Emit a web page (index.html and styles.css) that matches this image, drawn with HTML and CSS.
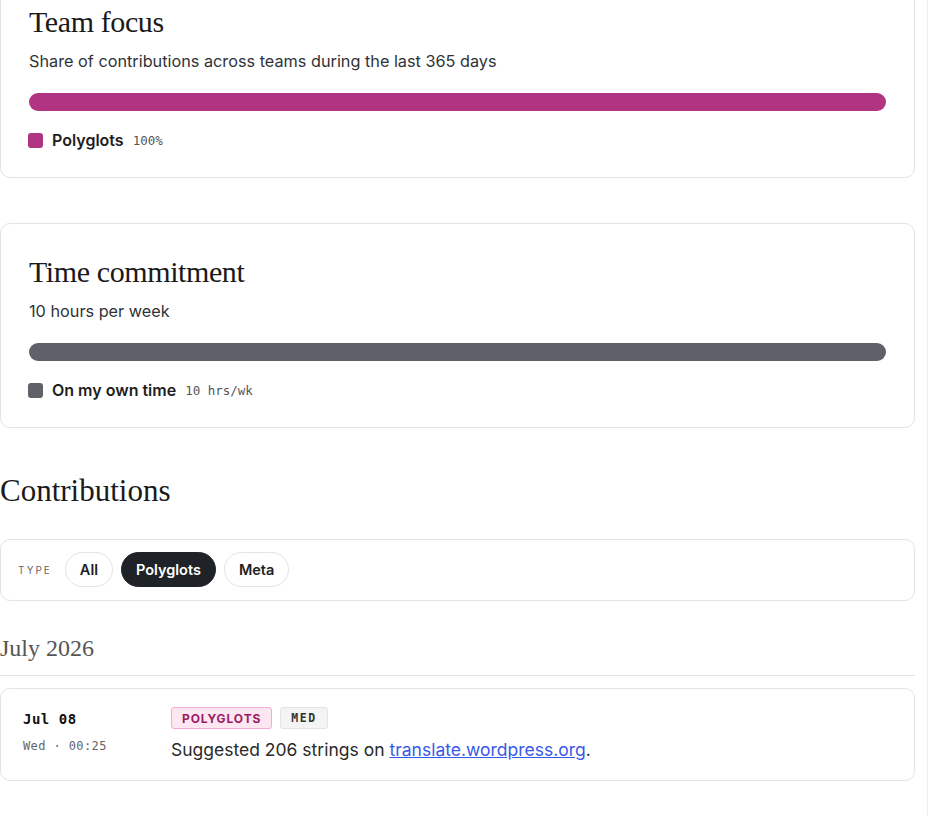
FILE: index.html
```html
<!DOCTYPE html>
<html lang="en">
<head>
    <meta charset="UTF-8" />
    <meta name="viewport" content="width=device-width, initial-scale=1.0">
    <title>Profile - Contributions</title>
    <link rel="stylesheet" href="styles.css">
</head>
<body>
    <div class="page">
        <main class="main">
            <section class="card">
                <h2 class="card-title">Team focus</h2>
                <p class="card-sub">Share of contributions across teams during the last 365 days</p>
                <div class="bar">
                    <span class="bar-fill fill-polyglots" style="width:100%;"></span>
                </div>
                <div class="legend">
                    <span class="swatch fill-polyglots"></span>
                    <span class="legend-name">Polyglots</span>
                    <span class="legend-value">100%</span>
                </div>
            </section>

            <section class="card">
                <h2 class="card-title">Time commitment</h2>
                <p class="card-sub">10 hours per week</p>
                <div class="bar">
                    <span class="bar-fill fill-own" style="width:100%;"></span>
                </div>
                <div class="legend">
                    <span class="swatch fill-own"></span>
                    <span class="legend-name">On my own time</span>
                    <span class="legend-value">10 hrs/wk</span>
                </div>
            </section>

            <h2 class="section-title">Contributions</h2>

            <!-- filter by team -->
            <div class="filters">
                <span class="filter-label">Type</span>
                <button class="pill">All</button>
                <button class="pill active">Polyglots</button>
                <button class="pill">Meta</button>
            </div>

            <h3 class="month">July 2026</h3>

            <div class="entry">
                <div class="entry-date">
                    <div class="entry-day">Jul 08</div>
                    <div class="entry-time">Wed · 00:25</div>
                </div>
                <div class="entry-body">
                    <div class="tags">
                        <span class="tag tag-team">Polyglots</span>
                        <span class="tag tag-size">MED</span>
                    </div>
                    <p class="entry-text">Suggested 206 strings on <a href="#">translate.wordpress.org</a>.</p>
                </div>
            </div>
        </main>
    </div>
</body>
</html>
```

FILE: styles.css
```css
body {
    margin: 0;
    padding: 0;
    background-color: #fff;
    color: #1e1e1e;
    font-family: Inter, "Noto Sans", Arial, sans-serif;
}

.page {
    width: 915px;
    min-height: 100vh;
    padding-right: 12px;
    border-right: 1px solid #efefef;
}

/* page is scrolled a little, first card starts above the fold */
.main {
    margin-top: -27px;
    padding-bottom: 40px;
}

.card {
    border: 1px solid #e4e4e4;
    border-radius: 10px;
    padding: 28px 28px 26px 27px;
    background-color: #fff;
    margin-bottom: 45px;
}

.card-title {
    margin: 0 0 0 1px;
    font-family: "Liberation Serif", "DejaVu Serif", serif;
    font-weight: normal;
    font-size: 30px;
    line-height: 39px;
    color: #1a1a1a;
    letter-spacing: -0.4px;
}

.card-sub {
    margin: 9px 0 0 1px;
    font-size: 16.25px;
    line-height: 22px;
    color: #2f3338;
}

.bar {
    margin: 21px 0 0 1px;
    height: 18px;
    border-radius: 9px;
    background-color: #eee;
    overflow: hidden;
    display: flex;
}

.bar-fill {
    display: block;
    height: 100%;
}

.fill-polyglots {
    background-color: #b13482;
}

.fill-own {
    background-color: #5e6167;
}

.legend {
    margin-top: 18px;
    display: flex;
    align-items: center;
    height: 22px;
}

.swatch {
    width: 15px;
    height: 15px;
    border-radius: 3px;
    margin-right: 9px;
}

.legend-name {
    font-size: 16px;
    font-weight: 600;
    color: #1e1e1e;
    margin-right: 9px;
}

.legend-value {
    font-family: "DejaVu Sans Mono", "Liberation Mono", monospace;
    font-size: 12.5px;
    color: #555;
}

.section-title {
    margin: -2px 0 28px;
    font-family: "Liberation Serif", "DejaVu Serif", serif;
    font-weight: normal;
    font-size: 31px;
    line-height: 40px;
    color: #1a1a1a;
}

.filters {
    display: flex;
    align-items: center;
    gap: 8px;
    border: 1px solid #e4e4e4;
    border-radius: 10px;
    padding: 12px 17px 13px;
}

.filter-label {
    font-size: 10px;
    letter-spacing: 2px;
    text-transform: uppercase;
    color: #666;
    margin-right: 5px;
}

.pill {
    font-family: Inter, "Noto Sans", Arial, sans-serif;
    font-size: 14.5px;
    font-weight: 600;
    height: 35px;
    padding: 0 14px;
    border: 1px solid #e4e4e4;
    border-radius: 18px;
    background-color: #fff;
    color: #1e1e1e;
    cursor: pointer;
}

.pill.active {
    background-color: #1f2327;
    border-color: #1f2327;
    color: #fff;
}

.month {
    margin: 32px 0 0;
    padding-bottom: 11px;
    border-bottom: 1px solid #e4e4e4;
    font-family: "Liberation Serif", "DejaVu Serif", serif;
    font-weight: normal;
    font-size: 24px;
    line-height: 31px;
    color: #555;
}

.entry {
    margin-top: 12px;
    display: flex;
    border: 1px solid #e4e4e4;
    border-radius: 10px;
    padding: 18px 22px;
}

.entry-date {
    width: 148px;
    flex-shrink: 0;
    padding-top: 1px;
    font-family: "DejaVu Sans Mono", "Liberation Mono", monospace;
}

.entry-day {
    font-size: 14px;
    font-weight: bold;
    letter-spacing: 0.5px;
    line-height: 22px;
    color: #111;
}

.entry-time {
    margin-top: 7px;
    font-size: 12px;
    letter-spacing: 0.4px;
    line-height: 18px;
    color: #666;
}

.tags {
    display: flex;
    gap: 8px;
}

.tag {
    display: inline-flex;
    align-items: center;
    height: 22px;
    box-sizing: border-box;
    padding: 0 10px;
    border-radius: 3px;
    font-size: 12px;
    font-weight: 700;
    letter-spacing: 0.9px;
    text-transform: uppercase;
}

.tag-team {
    background-color: #fde7f3;
    border: 1px solid #f5a9d3;
    color: #9b1c63;
}

.tag-size {
    background-color: #f4f4f4;
    border: 1px solid #e4e4e4;
    color: #333;
    font-family: "DejaVu Sans Mono", "Liberation Mono", monospace;
    font-size: 11.5px;
    letter-spacing: 1.5px;
}

.entry-text {
    margin: 9px 0 0;
    font-size: 17.5px;
    line-height: 24px;
    color: #2a2a2a;
}

.entry-text a {
    color: #3858e9;
}
```
